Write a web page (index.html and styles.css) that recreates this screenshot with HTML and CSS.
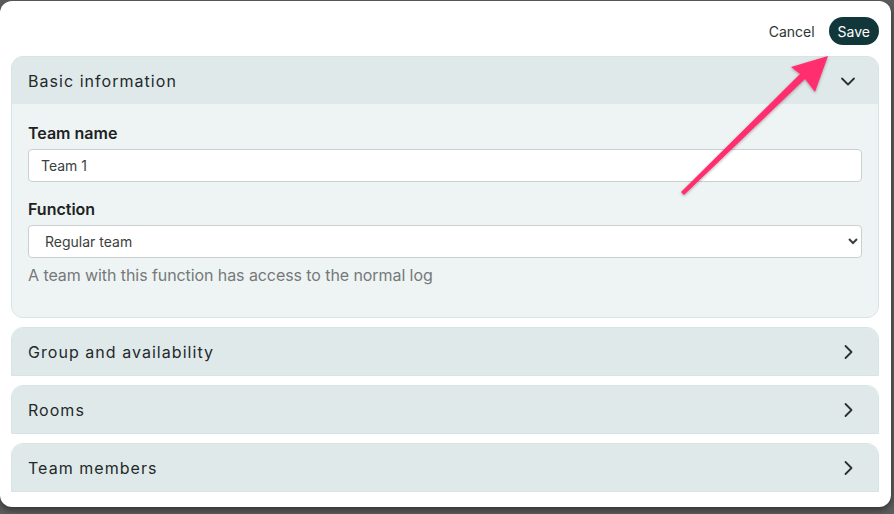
FILE: index.html
```html
<!DOCTYPE html>
<html>
<head>
<meta charset="utf-8">
<link rel="stylesheet" href="styles.css">
</head>
<body>
<div class="modal">
  <div class="actions">
    <button class="btn-cancel">Cancel</button>
    <button class="btn-save">Save</button>
  </div>
  <div class="sections">
    <div class="acc open">
      <div class="acc-head">
        <span>Basic information</span>
        <svg class="chev" width="16" height="16" viewBox="0 0 16 16"><path d="M2 5.5l6 6 6-6" fill="none" stroke="#2b2f30" stroke-width="1.8" stroke-linecap="round" stroke-linejoin="round"/></svg>
      </div>
      <div class="acc-body">
        <label class="lbl">Team name</label>
        <input class="field" type="text" value="Team 1">
        <label class="lbl lbl2">Function</label>
        <select class="field sel"><option>Regular team</option></select>
        <p class="help">A team with this function has access to the normal log</p>
      </div>
    </div>
    <div class="acc">
      <div class="acc-head">
        <span>Group and availability</span>
        <svg class="chev" width="16" height="16" viewBox="0 0 16 16"><path d="M5.5 2l6 6-6 6" fill="none" stroke="#2b2f30" stroke-width="1.8" stroke-linecap="round" stroke-linejoin="round"/></svg>
      </div>
    </div>
    <div class="acc">
      <div class="acc-head">
        <span>Rooms</span>
        <svg class="chev" width="16" height="16" viewBox="0 0 16 16"><path d="M5.5 2l6 6-6 6" fill="none" stroke="#2b2f30" stroke-width="1.8" stroke-linecap="round" stroke-linejoin="round"/></svg>
      </div>
    </div>
    <div class="acc">
      <div class="acc-head">
        <span>Team members</span>
        <svg class="chev" width="16" height="16" viewBox="0 0 16 16"><path d="M5.5 2l6 6-6 6" fill="none" stroke="#2b2f30" stroke-width="1.8" stroke-linecap="round" stroke-linejoin="round"/></svg>
      </div>
    </div>
  </div>
  <svg class="arrow" width="894" height="514" viewBox="0 0 894 514">
    <defs>
      <filter id="sh" x="-20%" y="-20%" width="140%" height="140%">
        <feDropShadow dx="0" dy="1" stdDeviation="1.5" flood-color="#000" flood-opacity="0.35"/>
      </filter>
    </defs>
    <polygon points="681,192 684,195 805,79 815,92 828,56 791,67 800,74" fill="#ff2f6e" filter="url(#sh)"/>
  </svg>
</div>
</body>
</html>
```
FILE: styles.css
```css
* { box-sizing: border-box; }
html, body { margin: 0; padding: 0; }
body {
  background: #5c5c5c;
  width: 894px;
  height: 514px;
  overflow: hidden;
  font-family: Inter, "Noto Sans", sans-serif;
  color: #222;
}
.modal {
  position: relative;
  margin-top: 1px;
  width: 891px;
  height: 506px;
  background: #fff;
  border-radius: 12px;
  box-shadow: 0 3px 6px rgba(0,0,0,0.45);
  padding: 16px 12px 14px 11px;
  display: flex;
  flex-direction: column;
}
.actions {
  display: flex;
  justify-content: flex-end;
  align-items: center;
  gap: 6px;
  height: 28px;
  margin-bottom: 11px;
}
.btn-cancel {
  background: none;
  border: none;
  font: 400 14px Inter, sans-serif;
  color: #2d3334;
  padding: 0 8px;
  height: 28px;
}
.btn-save {
  background: #12373b;
  color: #fff;
  border: none;
  border-radius: 14px;
  height: 28px;
  padding: 0 9px;
  font: 400 14px Inter, sans-serif;
}
.sections {
  display: flex;
  flex-direction: column;
  gap: 9px;
}
.acc {
  border: 1px solid #d6e4e5;
  border-radius: 12px 12px 0 0;
  background: #e0e9ea;
  overflow: hidden;
}
.acc.open {
  border-radius: 12px;
}
.acc-head {
  height: 47px;
  display: flex;
  align-items: center;
  justify-content: space-between;
  padding: 0 22px 0 16px;
  font-size: 16px;
  letter-spacing: 0.065em;
  color: #23292a;
  background: #e0e9ea;
}
.acc.open .acc-head { padding-right: 22px; }
.chev { display: block; }
.acc-body {
  background: #eef4f4;
  padding: 17px 16px 30px;
  display: flex;
  flex-direction: column;
}
.lbl {
  font-weight: 600;
  font-size: 16px;
  line-height: 24px;
  color: #1e2223;
  margin-bottom: 4px;
}
.lbl2 { margin-top: 15px; }
.field {
  width: 100%;
  height: 33px;
  border: 1px solid #cbcfd0;
  border-radius: 4px;
  background: #fff;
  font: 400 14px Inter, sans-serif;
  color: #3a3f40;
  padding: 0 12px;
  outline: none;
}
.sel { padding: 0 12px; }
.help {
  margin: 5px 0 0;
  font-size: 16px;
  line-height: 24px;
  letter-spacing: -0.005em;
  color: #75797a;
}
.arrow {
  position: absolute;
  left: 0;
  top: -1px;
  pointer-events: none;
}
```
